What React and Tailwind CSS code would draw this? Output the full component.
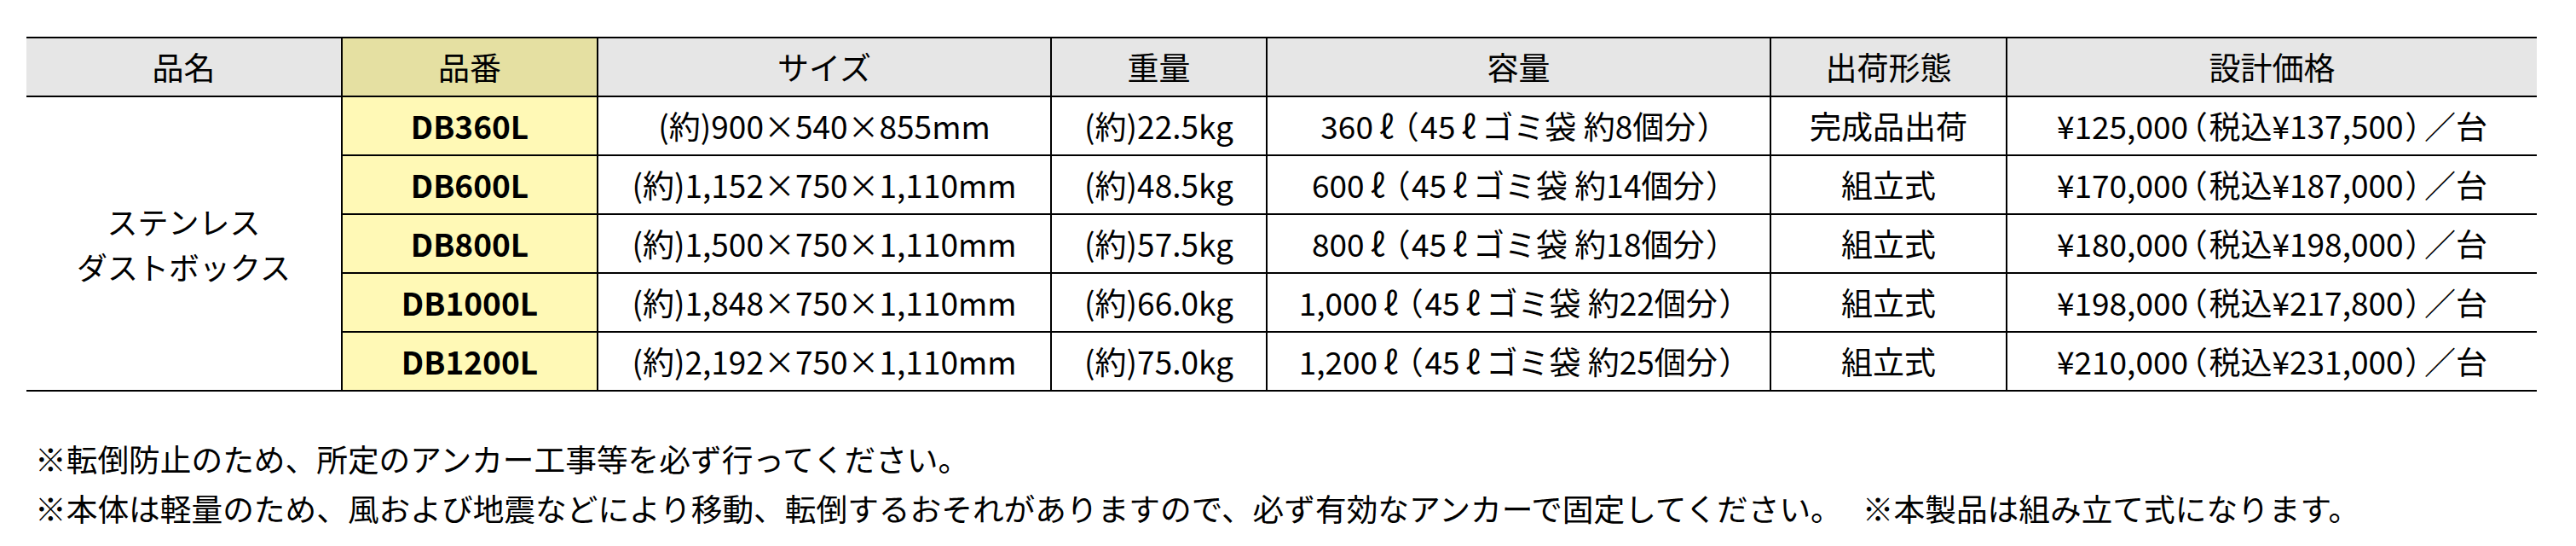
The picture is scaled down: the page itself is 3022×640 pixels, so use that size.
import React from "react";

const rows = [
  ["DB360L", "(約)900×540×855mm", "(約)22.5kg", "360ℓ（45ℓゴミ袋 約8個分）", "完成品出荷", "¥125,000（税込¥137,500）／台"],
  ["DB600L", "(約)1,152×750×1,110mm", "(約)48.5kg", "600ℓ（45ℓゴミ袋 約14個分）", "組立式", "¥170,000（税込¥187,000）／台"],
  ["DB800L", "(約)1,500×750×1,110mm", "(約)57.5kg", "800ℓ（45ℓゴミ袋 約18個分）", "組立式", "¥180,000（税込¥198,000）／台"],
  ["DB1000L", "(約)1,848×750×1,110mm", "(約)66.0kg", "1,000ℓ（45ℓゴミ袋 約22個分）", "組立式", "¥198,000（税込¥217,800）／台"],
  ["DB1200L", "(約)2,192×750×1,110mm", "(約)75.0kg", "1,200ℓ（45ℓゴミ袋 約25個分）", "組立式", "¥210,000（税込¥231,000）／台"],
];

const heads = ["サイズ", "重量", "容量", "出荷形態", "設計価格"];

const cell = "h-[69px] flex items-center justify-center border-b-2 border-black whitespace-nowrap";

// litre sign and full-width brackets are set a little apart, like the source sheet
const Text = ({ value }) =>
  value.split(/([ℓ（）])/).map((part, i) => {
    if (part === "ℓ") return <span key={i} className="mx-[7px]">ℓ</span>;
    if (part === "（" || part === "）")
      return (
        <span key={i} className="[font-feature-settings:'palt'] mx-[3px]">
          {part}
        </span>
      );
    return part;
  });

const App = () => {
  return (
    <div className="w-[3022px] h-[640px] bg-white text-black font-['Noto_Sans_CJK_JP',sans-serif] pt-[43px] pl-[31px]">
      <div className="grid grid-cols-[369px_300px_532px_253px_591px_277px_623px] w-[2945px] border-t-2 border-black text-[37px] leading-none">
        <div className={`${cell} bg-[#e6e6e6]`}>品名</div>
        <div className={`${cell} border-l-2 bg-[#e5e0a2]`}>品番</div>
        {heads.map((h) => (
          <div key={h} className={`${cell} border-l-2 bg-[#e6e6e6]`}>
            {h}
          </div>
        ))}

        <div className="row-span-5 flex flex-col items-center justify-center border-b-2 border-black text-[36px] leading-[53px]">
          <span>ステンレス</span>
          <span>ダストボックス</span>
        </div>
        {rows.map((r) => (
          <React.Fragment key={r[0]}>
            <div className={`${cell} border-l-2 bg-[#fff9b6] font-bold`}>{r[0]}</div>
            {r.slice(1).map((v, i) => (
              <div key={i} className={`${cell} border-l-2`}>
                <Text value={v} />
              </div>
            ))}
          </React.Fragment>
        ))}
      </div>

      <div className="mt-[49px] ml-[10px] text-[36.7px] leading-[58px] whitespace-nowrap">
        <p>※転倒防止のため、所定のアンカー工事等を必ず行ってください。</p>
        <p>
          ※本体は軽量のため、風および地震などにより移動、転倒するおそれがありますので、必ず有効なアンカーで固定してください。
          <span className="ml-[24px]">※本製品は組み立て式になります。</span>
        </p>
      </div>
    </div>
  );
};

export default App;
